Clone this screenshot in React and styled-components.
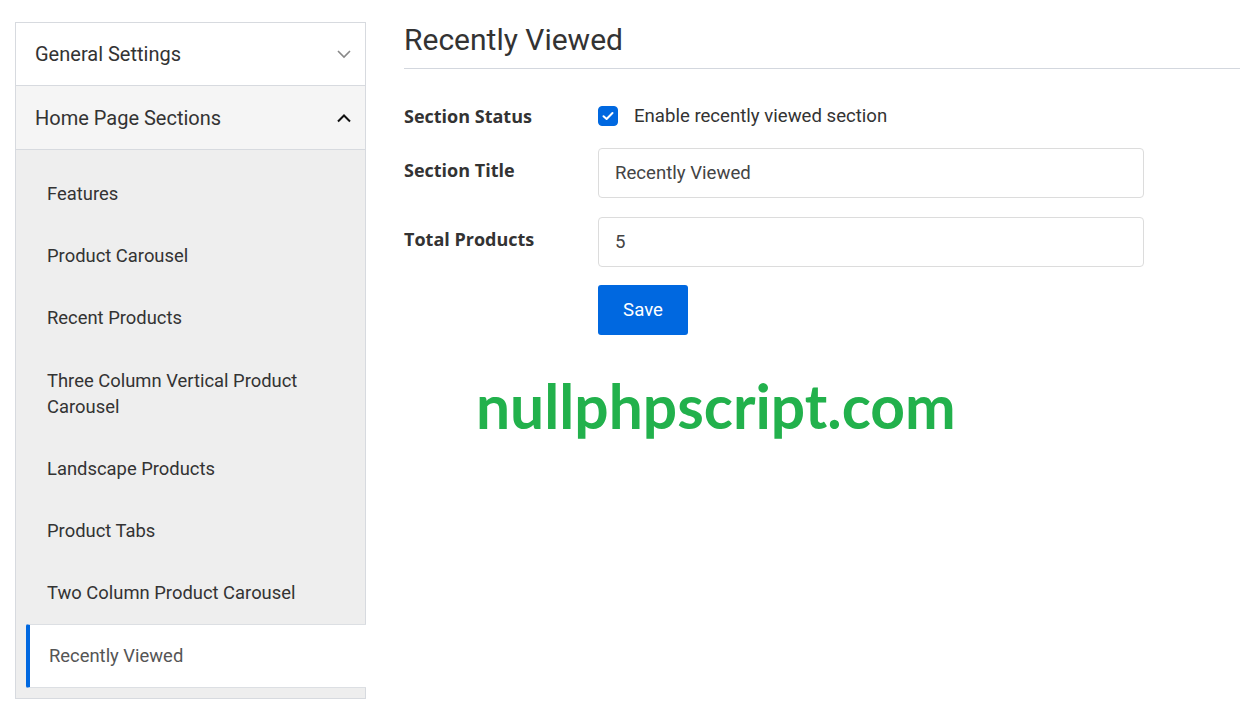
import React, { useState } from "react";
import styled, { createGlobalStyle } from "styled-components";

const sections = [
    "Features",
    "Product Carousel",
    "Recent Products",
    "Three Column Vertical Product Carousel",
    "Landscape Products",
    "Product Tabs",
    "Two Column Product Carousel",
    "Recently Viewed",
];

function Chevron({ up }) {
    return (
        <svg width="16" height="10" viewBox="0 0 16 10">
            {up ? (
                <path d="M2 8.5 L8 2.5 L14 8.5" fill="none" stroke="#111" strokeWidth="2" />
            ) : (
                <path d="M2 2 L8 8 L14 2" fill="none" stroke="#888" strokeWidth="1.6" />
            )}
        </svg>
    );
}

export default function App() {
    const [active, setActive] = useState("Recently Viewed");
    const [enabled, setEnabled] = useState(true);
    const [title, setTitle] = useState("Recently Viewed");
    const [total, setTotal] = useState("5");

    return (
        <>
            <GlobalStyle />
            <Page>
                <Sidebar>
                    <Header>
                        <HeaderTitle>General Settings</HeaderTitle>
                        <Chevron />
                    </Header>
                    <Header $open>
                        <HeaderTitle>Home Page Sections</HeaderTitle>
                        <Chevron up />
                    </Header>
                    <SectionList>
                        {sections.map((name) => (
                            <SectionItem
                                key={name}
                                $active={name === active}
                                onClick={() => setActive(name)}
                            >
                                {name}
                            </SectionItem>
                        ))}
                    </SectionList>
                </Sidebar>

                <Main>
                    <Title>Recently Viewed</Title>
                    <Form onSubmit={(e) => e.preventDefault()}>
                        <Row>
                            <Label>Section Status</Label>
                            <CheckLabel>
                                <Box
                                    $checked={enabled}
                                    onClick={() => setEnabled(!enabled)}
                                >
                                    {enabled && (
                                        <svg width="12" height="10" viewBox="0 0 12 10">
                                            <path
                                                d="M1.5 5.2 L4.6 8 L10.5 2"
                                                fill="none"
                                                stroke="#fff"
                                                strokeWidth="2"
                                                strokeLinecap="round"
                                                strokeLinejoin="round"
                                            />
                                        </svg>
                                    )}
                                </Box>
                                Enable recently viewed section
                            </CheckLabel>
                        </Row>
                        <Row>
                            <Label $field>Section Title</Label>
                            <TextInput
                                value={title}
                                onChange={(e) => setTitle(e.target.value)}
                            />
                        </Row>
                        <Row>
                            <Label $field>Total Products</Label>
                            <TextInput
                                value={total}
                                onChange={(e) => setTotal(e.target.value)}
                            />
                        </Row>
                        <Row>
                            <Label />
                            <SaveButton type="submit">Save</SaveButton>
                        </Row>
                    </Form>
                    <Watermark>nullphpscript.com</Watermark>
                </Main>
            </Page>
        </>
    );
}

const GlobalStyle = createGlobalStyle`
    body {
        margin: 0;
        background: #fff;
        font-family: Roboto, "Liberation Sans", sans-serif;
        color: #333;
    }
    * {
        box-sizing: border-box;
    }
`;

const Page = styled.div`
    display: flex;
    align-items: flex-start;
    gap: 38px;
    padding: 22px 0 0 15px;
`;

const Sidebar = styled.aside`
    width: 351px;
    flex-shrink: 0;
    border: 1px solid #d7dadf;
    background: #fff;
`;

const Header = styled.div`
    height: ${(p) => (p.$open ? "64px" : "63px")};
    display: flex;
    align-items: center;
    justify-content: space-between;
    padding: 0 13px 0 19px;
    border-bottom: 1px solid #d7dadf;
    background: ${(p) => (p.$open ? "#f5f5f5" : "#fff")};
`;

const HeaderTitle = styled.span`
    font-size: 20px;
    color: #333;
`;

const SectionList = styled.div`
    background: #eeeeee;
    padding: 13px 0 10px 10px;
`;

const SectionItem = styled.div`
    font-size: 18.4px;
    line-height: 26px;
    padding: ${(p) => (p.$active ? "18px 20px 18px 19px" : "17.1px 20px 17.1px 21px")};
    color: ${(p) => (p.$active ? "#555" : "#333")};
    background: ${(p) => (p.$active ? "#fff" : "transparent")};
    border-left: ${(p) => (p.$active ? "4px solid #0068e0" : "0")};
    border-top: 1px solid ${(p) => (p.$active ? "#dcdfe3" : "transparent")};
    border-bottom: 1px solid ${(p) => (p.$active ? "#dcdfe3" : "transparent")};
    border-radius: ${(p) => (p.$active ? "2px 0 0 2px" : "0")};
    margin-right: -1px;
    cursor: pointer;
`;

const Main = styled.main`
    flex: 1;
    min-width: 0;
`;

const Title = styled.h1`
    margin: 0;
    font-size: 30px;
    font-weight: 400;
    line-height: 35px;
    color: #333;
    padding-bottom: 11px;
    border-bottom: 1px solid #d3d7de;
`;

const Form = styled.form`
    display: flex;
    flex-direction: column;
    gap: 19px;
    margin-top: 35px;
`;

const Row = styled.div`
    display: flex;
    align-items: flex-start;
    min-height: 25px;
`;

const Label = styled.label`
    width: 194px;
    flex-shrink: 0;
    font-family: "Open Sans", sans-serif;
    font-weight: 700;
    font-size: 18px;
    line-height: 24px;
    color: #333;
    padding-top: ${(p) => (p.$field ? "10px" : "0")};
`;

const CheckLabel = styled.div`
    display: flex;
    align-items: center;
    gap: 16px;
    font-size: 18.6px;
    line-height: 24px;
    color: #333;
`;

const Box = styled.span`
    width: 20px;
    height: 20px;
    border-radius: 4px;
    display: flex;
    align-items: center;
    justify-content: center;
    background: ${(p) => (p.$checked ? "#0068e0" : "#fff")};
    border: 1px solid ${(p) => (p.$checked ? "#0068e0" : "#bbb")};
    cursor: pointer;
`;

const TextInput = styled.input`
    width: 546px;
    height: 50px;
    padding: 0 16px;
    border: 1px solid #dcdcdc;
    border-radius: 4px;
    font-family: Roboto, sans-serif;
    font-size: 18.6px;
    color: #444;
    outline: none;
`;

const SaveButton = styled.button`
    width: 90px;
    height: 50px;
    margin-top: -1px;
    border: none;
    border-radius: 3px;
    background: #0068e0;
    color: #fff;
    font-family: Roboto, sans-serif;
    font-size: 18.6px;
    cursor: pointer;
`;

const Watermark = styled.div`
    margin: 41px 0 0 72px;
    font-family: Lato, "Open Sans", sans-serif;
    font-weight: 700;
    font-size: 60.5px;
    line-height: 1;
    color: #22b14c;
`;
